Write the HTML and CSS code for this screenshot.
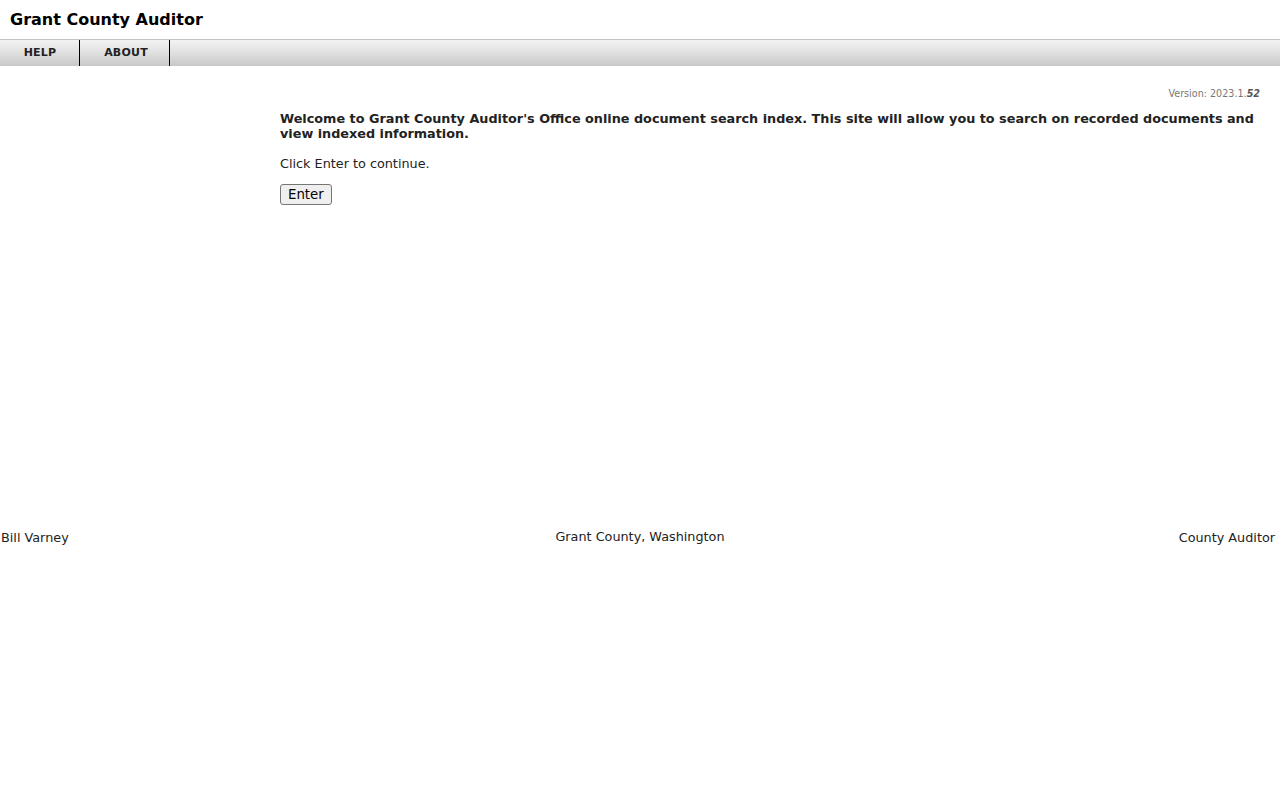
FILE: index.html
```html
<!DOCTYPE html>
<html>
<head>
<meta charset="utf-8">
<title>Grant County Auditor</title>
<link rel="stylesheet" href="styles.css">
</head>
<body>
<header class="header">
  <h1 class="title">Grant County Auditor</h1>
</header>
<nav class="navbar">
  <a class="nav-item nav-help" href="#">HELP</a>
  <a class="nav-item nav-about" href="#">ABOUT</a>
</nav>
<main class="main">
  <div class="side"></div>
  <div class="content">
    <div class="version">Version: 2023.1.<b><i>52</i></b></div>
    <p class="welcome">Welcome to Grant County Auditor's Office online document search index. This site will allow you to search on recorded documents and view indexed information.</p>
    <p class="click">Click Enter to continue.</p>
    <button class="enter" type="button">Enter</button>
  </div>
</main>
<footer class="footer">
  <span class="foot-left">Bill Varney</span>
  <span class="foot-center">Grant County, Washington</span>
  <span class="foot-right">County Auditor</span>
</footer>
</body>
</html>
```
FILE: styles.css
```css
html, body {
  margin: 0;
  padding: 0;
  background: #fff;
  font-family: "DejaVu Sans", Verdana, sans-serif;
  color: #222;
}
.header {
  height: 39px;
  box-sizing: border-box;
  padding: 10px 10px 0 10px;
}
.title {
  margin: 0;
  font-size: 16px;
  font-weight: bold;
  color: #000;
  line-height: 20px;
}
.navbar {
  display: flex;
  height: 27px;
  box-sizing: border-box;
  border-top: 1px solid #c4c4c4;
  background: linear-gradient(to bottom, #f2f2f2 0%, #e4e4e4 40%, #c8c8c8 100%);
}
.nav-item {
  display: flex;
  align-items: center;
  justify-content: center;
  height: 26px;
  padding: 0 0 2px 1px;
  box-sizing: border-box;
  border-right: 1px solid #000;
  font-size: 11px;
  font-weight: bold;
  letter-spacing: 0.2px;
  color: #222;
  text-decoration: none;
}
.nav-help { width: 80px; }
.nav-about { width: 90px; padding-left: 3px; }
.main {
  display: flex;
  height: 462px;
}
.side {
  width: 280px;
  flex: none;
}
.content {
  flex: 1;
  padding: 22px 20px 0 0;
}
.version {
  text-align: right;
  font-size: 9.6px;
  color: #777;
  line-height: 12px;
}
.version b { color: #555; }
.welcome {
  margin: 11px 0 0 0;
  font-size: 12.8px;
  font-weight: bold;
  line-height: 15px;
  color: #222;
}
.click {
  margin: 15px 0 0 0;
  font-size: 12.8px;
  line-height: 15px;
}
.enter {
  display: block;
  margin-top: 13px;
  font-family: "DejaVu Sans", sans-serif;
  font-size: 13.33px;
  padding: 1px 7px;
  height: 21px;
  background: #efefef;
  border: 1px solid #767676;
  border-radius: 3px;
  color: #000;
}
.footer {
  display: grid;
  grid-template-columns: 1fr auto 1fr;
  align-items: center;
  padding: 0 5px 0 5px;
  font-size: 12.8px;
  line-height: 20px;
}
.foot-left { justify-self: start; margin-left: -4px; }
.foot-center { justify-self: center; position: relative; top: -1px; }
.foot-right { justify-self: end; }
```
